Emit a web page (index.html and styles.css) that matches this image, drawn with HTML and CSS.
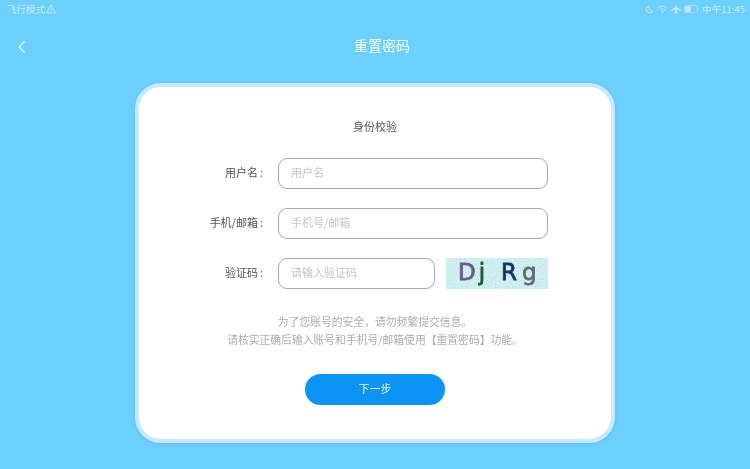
FILE: index.html
```
<!DOCTYPE html>
<html lang="zh">
<head>
<meta charset="utf-8">
<title>重置密码</title>
<link rel="stylesheet" href="styles.css">
</head>
<body>
<div class="page">
<div class="status">
  <div class="status-left"><span>飞行模式</span>
    <svg class="ic-warn" viewBox="0 0 10 10"><path d="M5 1 L9.5 9 H0.5 Z M5 4 V6.5 M5 7.3 V8" fill="none" stroke="currentColor" stroke-width="0.9"/></svg>
  </div>
  <div class="status-right">
    <svg class="ic" viewBox="0 0 10 10"><path d="M4.2 1 A4 4 0 1 0 9 6.6 A4.6 4.6 0 0 1 4.2 1 Z" fill="none" stroke="currentColor" stroke-width="1"/></svg>
    <svg class="ic ic-wide" viewBox="0 0 12 10"><path d="M0.8 3.5 A7.5 7.5 0 0 1 11.2 3.5 M2.6 5.5 A5 5 0 0 1 9.4 5.5 M4.4 7.4 A2.5 2.5 0 0 1 7.6 7.4" fill="none" stroke="currentColor" stroke-width="0.9"/><circle cx="6" cy="9" r="0.8" fill="currentColor"/></svg>
    <svg class="ic ic-plane" viewBox="0 0 10 10"><path d="M5 0.3 L5.8 3.6 L9.8 6 V7 L5.8 5.8 V8 L7 9 V9.7 L5 9.1 L3 9.7 V9 L4.2 8 V5.8 L0.2 7 V6 L4.2 3.6 Z" fill="currentColor"/></svg>
    <svg class="ic-bat" viewBox="0 0 15 8"><rect x="0.5" y="0.5" width="12.5" height="7" rx="1" fill="none" stroke="currentColor" stroke-width="0.7" opacity="0.7"/><rect x="1.2" y="1.2" width="5.5" height="5.6" fill="currentColor"/><rect x="13.6" y="2.6" width="1" height="2.8" fill="currentColor" opacity="0.7"/></svg>
    <span>中午11:45</span>
  </div>
</div>
<header class="topbar">
  <svg class="back" viewBox="0 0 10 14"><path d="M7.5 1.5 L2 7 L7.5 12.5" fill="none" stroke="currentColor" stroke-width="1.2"/></svg>
  <h1 class="title">重置密码</h1>
</header>
<main class="card">
  <h2 class="card-title">身份校验</h2>
  <form class="form">
    <div class="row">
      <label class="label">用户名<span class="colon">:</span></label>
      <div class="field field-full">用户名</div>
    </div>
    <div class="row">
      <label class="label">手机/邮箱<span class="colon">:</span></label>
      <div class="field field-full">手机号/邮箱</div>
    </div>
    <div class="row">
      <label class="label">验证码<span class="colon">:</span></label>
      <div class="field field-code">请输入验证码</div>
      <div class="captcha">
        <svg class="noise" viewBox="0 0 102 31" preserveAspectRatio="none">
          <filter id="speckle" x="0" y="0" width="100%" height="100%">
            <feTurbulence type="fractalNoise" baseFrequency="0.75" numOctaves="2" seed="7"/>
            <feColorMatrix type="matrix" values="0 0 0 0 0.45  0 0 0 0 0.65  0 0 0 0 0.67  2.6 0 0 0 -1.38"/>
          </filter>
          <rect width="102" height="31" fill="#d0f1f4"/>
          <rect width="102" height="31" filter="url(#speckle)"/>
        </svg>
        <span class="cap cap-d">D</span><span class="cap cap-j">j</span><span class="cap cap-r">R</span><span class="cap cap-g">g</span>
      </div>
    </div>
  </form>
  <p class="note">为了您账号的安全，请勿频繁提交信息。<br>请核实正确后输入账号和手机号/邮箱使用【重置密码】功能。</p>
  <button class="next" type="button">下一步</button>
</main>
</div>
</body>
</html>
```

FILE: styles.css
```
* { box-sizing: border-box; }
html, body { margin: 0; height: 100%; }
body {
  background: #6dd0fc;
  overflow: hidden;
}
.page {
  width: 750px;
  height: 469px;
  overflow: hidden;
  background: #6dd0fc;
  font-family: "Noto Sans CJK SC", "Liberation Sans", sans-serif;
  color: #fff;
  display: flex;
  flex-direction: column;
  align-items: center;
  filter: blur(0.3px);
}
.status {
  width: 100%;
  height: 18px;
  padding: 0 5px 0 7px;
  display: flex;
  justify-content: space-between;
  align-items: center;
  font-size: 9.5px;
  color: rgba(255, 255, 255, 0.6);
}
.status-left, .status-right { display: flex; align-items: center; }
.status-left { gap: 1px; }
.status-right { gap: 3px; }
.ic-warn { width: 10px; height: 10px; }
.ic { width: 9px; height: 9px; }
.ic-wide { width: 11px; }
.ic-plane { width: 10px; height: 10px; }
.ic-bat { width: 15px; height: 8px; }
.topbar {
  width: 100%;
  height: 56px;
  padding-bottom: 2px;
  display: flex;
  align-items: center;
  justify-content: center;
  position: relative;
}
.back {
  position: absolute;
  left: 17px;
  top: 22px;
  width: 10px;
  height: 14px;
  color: rgba(255, 255, 255, 0.8);
}
.title {
  margin: 0 0 0 14px;
  font-size: 14px;
  font-weight: 400;
  color: rgba(255, 255, 255, 0.92);
}
.card {
  width: 480px;
  height: 360px;
  margin-top: 9px;
  background: #fff;
  border: 4px solid #c6eafb;
  border-radius: 26px;
  box-shadow: 0 1px 4px rgba(60, 150, 210, 0.35);
  display: flex;
  flex-direction: column;
  align-items: center;
  padding-top: 30px;
}
.card-title {
  margin: 0;
  height: 18px;
  line-height: 18px;
  font-size: 11px;
  font-weight: 400;
  color: #555;
}
.form {
  width: 100%;
  margin-top: 23px;
  display: flex;
  flex-direction: column;
  gap: 19px;
}
.row { display: flex; align-items: center; height: 31px; }
.label {
  width: 124px;
  text-align: right;
  font-size: 11px;
  line-height: 28px;
  height: 31px;
  color: #555;
  white-space: nowrap;
}
.colon { margin-left: 2px; }
.field {
  height: 31px;
  margin-left: 15px;
  padding-left: 12px;
  border: 1px solid #a4a9ad;
  border-radius: 9px;
  font-size: 11px;
  line-height: 26px;
  color: #c2c6c9;
}
.field-full { width: 270px; }
.field-code { width: 157px; }
.captcha {
  width: 102px;
  height: 31px;
  margin-left: 11px;
  position: relative;
  display: flex;
  align-items: flex-start;
  padding: 1px 0 0 12px;
  font-family: "DejaVu Sans", sans-serif;
  font-size: 23px;
  line-height: 27px;
  filter: blur(0.4px);
}
.noise {
  position: absolute;
  left: 0;
  top: 0;
  width: 102px;
  height: 31px;
}
.cap { position: relative; -webkit-text-stroke: 0.8px currentColor; }
.cap-d { color: #6b5a8c; }
.cap-j { color: #1f5a35; margin-left: 3px; margin-right: 16px; }
.cap-r { color: #1c2f68; }
.cap-g { color: #5f6d72; margin-left: 5px; }
.note {
  margin: 23px 0 0;
  text-align: center;
  font-size: 10.8px;
  line-height: 18px;
  color: #a9adb0;
}
.next {
  width: 140px;
  height: 31px;
  margin-top: 26px;
  border: 0;
  border-radius: 16px;
  background: #0b94f3;
  color: rgba(255, 255, 255, 0.92);
  font: inherit;
  font-size: 11px;
  line-height: 28px;
  padding: 0 0 3px;
}
```
